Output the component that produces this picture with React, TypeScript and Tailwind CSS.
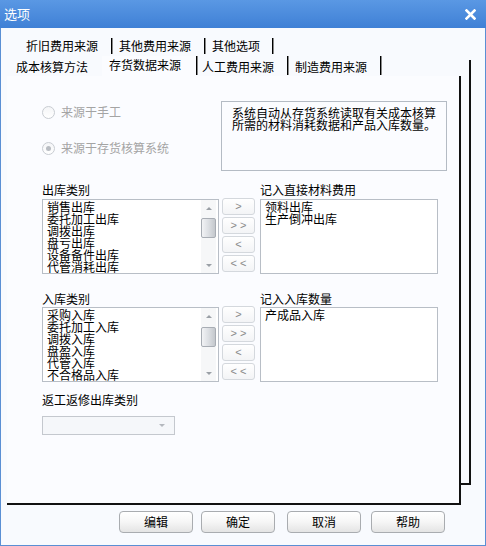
import React from "react";

const font = { fontFamily: '"Noto Sans CJK SC", "Liberation Sans", sans-serif' };

function Sep() {
    return (
        <div className="flex h-full">
            <div className="w-px bg-black" />
            <div className="w-px bg-[#8a8a8a]" />
        </div>
    );
}

function Radio({ checked, label }: { checked?: boolean; label: string }) {
    return (
        <div className="flex h-[14px] items-center">
            <div className="flex h-[13px] w-[13px] items-center justify-center rounded-full border border-[#c8ccd2] bg-gradient-to-b from-[#f4f5f7] to-white">
                {checked && <div className="h-[5px] w-[5px] rounded-full bg-[#b8bcc2]" />}
            </div>
            <span className="ml-[6px] text-[12px] leading-[14px] text-[#a4a4a4]">{label}</span>
        </div>
    );
}

function ScrollBar({ thumbTop }: { thumbTop: number }) {
    return (
        <div className="ml-auto mr-[2px] flex h-full w-[15px] flex-col bg-[#f6f7f8]">
            <div className="flex h-[16px] items-center justify-center">
                <div className="h-0 w-0 border-x-[3px] border-b-[3px] border-x-transparent border-b-[#9aa0a6]" />
            </div>
            <div className="relative flex-1">
                <div
                    className="absolute left-0 right-0 h-[20px] rounded-[2px] border border-[#a8adb4] bg-gradient-to-r from-[#f2f3f5] via-[#dcdfe3] to-[#c4c8cd]"
                    style={{ top: thumbTop }}
                />
            </div>
            <div className="flex h-[16px] items-center justify-center">
                <div className="h-0 w-0 border-x-[3px] border-t-[3px] border-x-transparent border-t-[#9aa0a6]" />
            </div>
        </div>
    );
}

function ListBox({ items, scroll, thumbTop = 2 }: { items: string[]; scroll?: boolean; thumbTop?: number }) {
    return (
        <div className="flex h-[75px] overflow-hidden border border-[#b8bec6] bg-white">
            <div className="flex-1 overflow-hidden pl-[4px] pt-px">
                {items.map((it) => (
                    <div key={it} className="h-[12px] whitespace-nowrap text-[12px] leading-[12px] text-black">
                        {it}
                    </div>
                ))}
            </div>
            {scroll && <ScrollBar thumbTop={thumbTop} />}
        </div>
    );
}

function MoveButtons() {
    return (
        <div className="mx-[3px] -mt-px flex w-[33px] flex-col gap-[2px]">
            {[">", "> >", "<", "< <"].map((t) => (
                <div
                    key={t}
                    className="flex h-[17px] items-center justify-center rounded-[3px] border border-[#d4d8dd] bg-gradient-to-b from-white to-[#f3f4f6] text-[11px] leading-none text-[#8a8a8a]"
                    style={{ fontFamily: '"Liberation Sans", sans-serif' }}
                >
                    {t}
                </div>
            ))}
        </div>
    );
}

function FooterButton({ label, className = "" }: { label: string; className?: string }) {
    return (
        <div
            className={`flex h-[22px] w-[74px] items-center justify-center rounded-[4px] border border-[#a9acb0] bg-gradient-to-b from-white via-[#f6f6f6] to-[#e4e4e4] text-[12px] text-black ${className}`}
        >
            {label}
        </div>
    );
}

export default function App() {
    return (
        <div className="flex h-[546px] w-[486px] flex-col border border-[#5a8fd4] bg-[#f8fafe]" style={font}>
            {/* Title bar */}
            <div className="-mx-px -mt-px flex h-[28px] items-center justify-between bg-gradient-to-b from-[#5a98e4] to-[#3f80d6] pl-[4px] pr-[10px]">
                <span className="text-[13px] text-white">选项</span>
                <svg width="11" height="11" viewBox="0 0 11 11">
                    <path d="M1.5 1.5 L9.5 9.5 M9.5 1.5 L1.5 9.5" stroke="white" strokeWidth="2.6" strokeLinecap="square" />
                </svg>
            </div>

            {/* Tabs + pages */}
            <div className="flex pl-[6px] pt-[8px]">
                <div className="flex w-[454px] flex-col">
                    {/* Tab row 1 */}
                    <div className="flex h-[20px] items-stretch pl-[13px] text-[12px] text-black">
                        <div className="flex w-[91px] items-center pl-[6px]">折旧费用来源</div>
                        <div className="py-[2px]"><Sep /></div>
                        <div className="flex w-[91px] items-center pl-[6px]">其他费用来源</div>
                        <div className="py-[2px]"><Sep /></div>
                        <div className="flex w-[66px] items-center pl-[6px]">其他选项</div>
                        <div className="py-[2px]"><Sep /></div>
                    </div>
                    {/* Tab row 2 */}
                    <div className="flex h-[20px] items-stretch text-[12px] text-black">
                        <div className="flex w-[95px] items-center pl-[9px] pt-[2px]">成本核算方法</div>
                        <div className="flex w-[94px] items-center bg-[#fbfcff] pb-[2px] pl-[7px]">存货数据来源</div>
                        <div className="pb-px"><Sep /></div>
                        <div className="flex w-[89px] items-center pl-[4px] pt-[2px]">人工费用来源</div>
                        <div className="pb-px"><Sep /></div>
                        <div className="flex w-[91px] items-center pl-[6px] pt-[2px]">制造费用来源</div>
                        <div className="pb-px"><Sep /></div>
                    </div>

                    {/* Front page */}
                    <div className="flex h-[429px] flex-col border-b-2 border-r-2 border-b-[#111] border-r-[#111] bg-[#fbfcff] pl-[35px] text-[12px]">
                        <div className="mt-[25px] flex h-[70px]">
                            <div className="flex w-[179px] flex-col gap-[22px] pt-[4px]">
                                <Radio label="来源于手工" />
                                <Radio checked label="来源于存货核算系统" />
                            </div>
                            <div className="w-[226px] border border-[#b4bbc4] bg-[#fbfcff] pl-[10px] pt-[5px] text-[12px] leading-[12px] text-black">
                                <div>系统自动从存货系统读取有关成本核算</div>
                                <div>所需的材料消耗数据和产品入库数量。</div>
                            </div>
                        </div>

                        <div className="mt-[12px] flex h-[14px] leading-[14px] text-black">
                            <div className="w-[218px]">出库类别</div>
                            <div>记入直接材料费用</div>
                        </div>
                        <div className="mt-[2px] flex">
                            <div className="w-[177px]">
                                <ListBox
                                    scroll
                                    thumbTop={2}
                                    items={["销售出库", "委托加工出库", "调拨出库", "盘亏出库", "设备备件出库", "代管消耗出库"]}
                                />
                            </div>
                            <MoveButtons />
                            <div className="ml-[2px] w-[178px]">
                                <ListBox items={["领料出库", "生产倒冲出库"]} />
                            </div>
                        </div>

                        <div className="mt-[18px] flex h-[14px] leading-[14px] text-black">
                            <div className="w-[218px]">入库类别</div>
                            <div>记入入库数量</div>
                        </div>
                        <div className="mt-px flex">
                            <div className="w-[177px]">
                                <ListBox
                                    scroll
                                    thumbTop={3}
                                    items={["采购入库", "委托加工入库", "调拨入库", "盘盈入库", "代管入库", "不合格品入库"]}
                                />
                            </div>
                            <MoveButtons />
                            <div className="ml-[2px] w-[178px]">
                                <ListBox items={["产成品入库"]} />
                            </div>
                        </div>

                        <div className="mt-[11px] h-[14px] leading-[14px] text-black">返工返修出库类别</div>
                        <div className="mt-[9px] flex h-[19px] w-[133px] items-center justify-end border border-[#c4c8ce] bg-[#f5f7fa] pr-[9px]">
                            <div className="h-0 w-0 border-x-[3px] border-t-[3px] border-x-transparent border-t-[#b4b8be]" />
                        </div>
                    </div>
                </div>

                {/* Back page edge */}
                <div className="mt-[24px] h-[425px] w-[10px] border-b-2 border-r-2 border-b-[#111] border-r-[#111]" />
            </div>

            {/* Footer buttons */}
            <div className="mt-[6px] flex pl-[118px]">
                <FooterButton label="编辑" />
                <FooterButton label="确定" className="ml-[8px]" />
                <FooterButton label="取消" className="ml-[12px]" />
                <FooterButton label="帮助" className="ml-[10px]" />
            </div>
        </div>
    );
}
